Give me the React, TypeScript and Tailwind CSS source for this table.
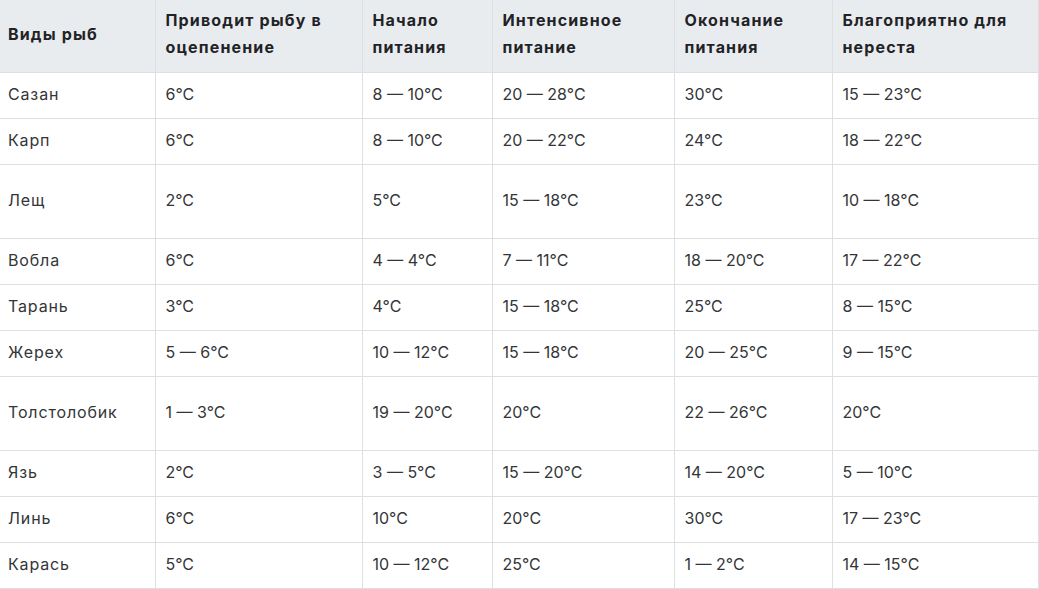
const headers = [
  "Виды рыб",
  "Приводит рыбу в оцепенение",
  "Начало питания",
  "Интенсивное питание",
  "Окончание питания",
  "Благоприятно для нереста",
];

const widths = ["w-[155px]", "w-[207px]", "w-[130px]", "w-[182px]", "w-[158px]", "w-[206px]"];

const rows: { cells: string[]; tall?: boolean }[] = [
  { cells: ["Сазан", "6°C", "8 — 10°C", "20 — 28°C", "30°C", "15 — 23°C"] },
  { cells: ["Карп", "6°C", "8 — 10°C", "20 — 22°C", "24°C", "18 — 22°C"] },
  { cells: ["Лещ", "2°C", "5°C", "15 — 18°C", "23°C", "10 — 18°C"], tall: true },
  { cells: ["Вобла", "6°C", "4 — 4°C", "7 — 11°C", "18 — 20°C", "17 — 22°C"] },
  { cells: ["Тарань", "3°C", "4°C", "15 — 18°C", "25°C", "8 — 15°C"] },
  { cells: ["Жерех", "5 — 6°C", "10 — 12°C", "15 — 18°C", "20 — 25°C", "9 — 15°C"] },
  { cells: ["Толстолобик", "1 — 3°C", "19 — 20°C", "20°C", "22 — 26°C", "20°C"], tall: true },
  { cells: ["Язь", "2°C", "3 — 5°C", "15 — 20°C", "14 — 20°C", "5 — 10°C"] },
  { cells: ["Линь", "6°C", "10°C", "20°C", "30°C", "17 — 23°C"] },
  { cells: ["Карась", "5°C", "10 — 12°C", "25°C", "1 — 2°C", "14 — 15°C"] },
];

export default function App() {
  return (
    <div className="min-h-screen bg-white font-['Inter',sans-serif] text-[16px] leading-[27px]">
      <table className="w-[1038px] table-fixed border-collapse">
        <thead>
          <tr className="h-[72px] bg-[#e9ecef]">
            {headers.map((h, i) => (
              <th
                key={h}
                className={`${widths[i]} border border-t-0 border-[#dcdfe3] px-[10px] pt-[7px] pb-[11px] text-left align-middle font-bold tracking-[1.15px] text-[#1f2326] ${
                  i === 0 ? "border-l-0 pl-[8px]" : ""
                }`}
              >
                {h}
              </th>
            ))}
          </tr>
        </thead>
        <tbody>
          {rows.map((row) => (
            <tr key={row.cells[0]} className={row.tall ? "h-[74px]" : "h-[46px]"}>
              {row.cells.map((c, i) => (
                <td
                  key={i}
                  className={`border border-[#dcdfe3] px-[10px] pt-[8px] pb-[10px] align-middle text-[#333538] ${
                    i === 0 ? "border-l-0 pl-[8px] tracking-[0.85px]" : ""
                  }`}
                >
                  {c}
                </td>
              ))}
            </tr>
          ))}
        </tbody>
      </table>
    </div>
  );
}
